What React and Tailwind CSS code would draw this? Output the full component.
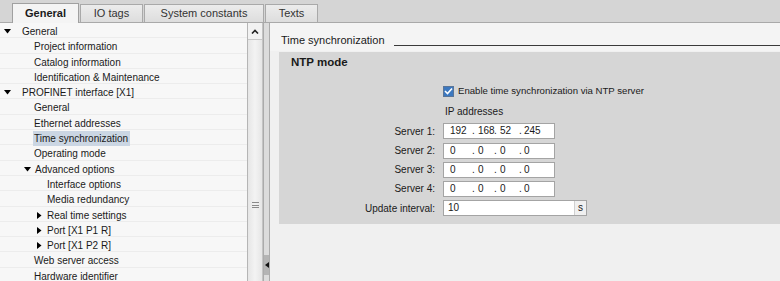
import React from "react";

const font = { fontFamily: '"Liberation Sans", Arial, sans-serif' };

const DownTri = () => (
  <svg width="7" height="5" viewBox="0 0 7 5" className="shrink-0">
    <path d="M0 0 H7 L3.5 4.5 Z" fill="#000" />
  </svg>
);

const RightTri = () => (
  <svg width="5" height="7" viewBox="0 0 5 7" className="shrink-0">
    <path d="M0 0 V7 L4.5 3.5 Z" fill="#000" />
  </svg>
);

const tree = [
  { label: "General", tri: "down", tx: 22, ax: 4 },
  { label: "Project information", tx: 34 },
  { label: "Catalog information", tx: 34 },
  { label: "Identification & Maintenance", tx: 34 },
  { label: "PROFINET interface [X1]", tri: "down", tx: 22, ax: 4 },
  { label: "General", tx: 34 },
  { label: "Ethernet addresses", tx: 34 },
  { label: "Time synchronization", tx: 34, selected: true },
  { label: "Operating mode", tx: 34 },
  { label: "Advanced options", tri: "down", tx: 35, ax: 24 },
  { label: "Interface options", tx: 47 },
  { label: "Media redundancy", tx: 47 },
  { label: "Real time settings", tri: "right", tx: 47, ax: 37 },
  { label: "Port [X1 P1 R]", tri: "right", tx: 47, ax: 37 },
  { label: "Port [X1 P2 R]", tri: "right", tx: 47, ax: 37 },
  { label: "Web server access", tx: 34 },
  { label: "Hardware identifier", tx: 34 },
];

const tabs = [
  { label: "General", w: 67, active: true },
  { label: "IO tags", w: 63 },
  { label: "System constants", w: 120 },
  { label: "Texts", w: 53 },
];

const IpField = ({ parts }) => (
  <div className="relative h-[16px] w-[112px] border border-[#a4a4a4] bg-white text-[10px] leading-[14px]">
    <span className="absolute left-[6px]">{parts[0]}</span>
    <span className="absolute left-[28px]">.</span>
    <span className="absolute left-[34px]">{parts[1]}</span>
    <span className="absolute left-[50px]">.</span>
    <span className="absolute left-[56px]">{parts[2]}</span>
    <span className="absolute left-[75px]">.</span>
    <span className="absolute left-[80px]">{parts[3]}</span>
  </div>
);

const servers = [
  ["192", "168", "52", "245"],
  ["0", "0", "0", "0"],
  ["0", "0", "0", "0"],
  ["0", "0", "0", "0"],
];

export default function App() {
  return (
    <div className="flex h-[281px] w-[780px] flex-col overflow-hidden bg-[#d5d5d5] text-[#1a1a1a]" style={font}>
      {/* Tabs */}
      <div className="flex h-[23px] shrink-0 items-end gap-[1px] border-b border-[#a9a9a9] pl-[12px]">
        {tabs.map((t) => (
          <div
            key={t.label}
            style={{ width: t.w }}
            className={
              t.active
                ? "-mb-[1px] flex h-[20px] items-center justify-center border border-b-0 border-[#a0a0a0] bg-[#f4f4f4] text-[11px] font-bold"
                : "flex h-[18px] items-center justify-center border border-b-0 border-[#a9a9a9] bg-gradient-to-b from-[#ececec] to-[#dddddd] text-[11px] text-[#333]"
            }
          >
            {t.label}
          </div>
        ))}
      </div>

      <div className="flex min-h-0 flex-1">
        {/* Tree */}
        <div className="w-[247px] shrink-0 bg-[#f7f7f7] text-[10px]">
          {tree.map((r, i) => (
            <div key={i} className="relative h-[15.3px] border-b border-[#ececec]">
              {r.tri && (
                <span className="absolute flex" style={{ left: r.ax, top: r.tri === "down" ? 6 : 5 }}>
                  {r.tri === "down" ? <DownTri /> : <RightTri />}
                </span>
              )}
              <span
                className={
                  "absolute top-[1px] h-[15px] leading-[15px] " + (r.selected ? "bg-[#cbd6e3] pr-[2px] pl-[1px]" : "")
                }
                style={{ left: r.selected ? r.tx - 1 : r.tx }}
              >
                {r.label}
              </span>
            </div>
          ))}
        </div>

        {/* Scrollbar */}
        <div className="flex w-[16px] shrink-0 flex-col border-l border-[#b5b5b5] border-r border-r-[#c4c4c4] bg-[#ebebeb]">
          <div className="flex h-[17px] items-center justify-center border-b border-[#c8c8c8] bg-[#f2f2f2]">
            <svg width="8" height="5" viewBox="0 0 8 5">
              <path d="M1 4.5 L4 1.5 L7 4.5" stroke="#222" strokeWidth="1.6" fill="none" />
            </svg>
          </div>
          <div className="flex flex-1 items-start justify-center bg-gradient-to-r from-[#e6e6e6] via-[#f3f3f3] to-[#e6e6e6] pt-[162px]">
            <div className="flex h-[6px] w-[7px] flex-col justify-between">
              <div className="h-[1px] bg-[#8a8a8a]" />
              <div className="h-[1px] bg-[#8a8a8a]" />
              <div className="h-[1px] bg-[#8a8a8a]" />
            </div>
          </div>
        </div>

        {/* Splitter */}
        <div className="flex w-[7px] shrink-0 flex-col border-l border-r border-[#ababab] bg-[#dcdcdc]">
          <div className="flex-1" />
          <div className="mb-[6px] flex h-[20px] items-center justify-center bg-[#b4b4b4]">
            <svg width="4" height="6" viewBox="0 0 4 6">
              <path d="M4 0 V6 L0 3 Z" fill="#111" />
            </svg>
          </div>
        </div>

        {/* Right panel */}
        <div className="min-w-0 flex-1 bg-[#f0f0f0]">
          <div className="flex h-[28px] items-end bg-[#f4f4f4] pl-[11px]">
            <span className="mb-[4px] text-[11px] leading-[14px]">Time synchronization</span>
            <div className="mb-[5px] ml-[9px] h-[1px] flex-1 bg-[#3a3a3a]" />
          </div>
          <div className="ml-[9px] mt-[1px] h-[172px] bg-[#d6d6d6] pt-[3px]">
            <div className="pl-[12px] text-[11.5px] font-bold leading-[14px]">NTP mode</div>
            <div className="mt-[15px] flex items-center pl-[164px]">
              <div className="flex h-[11px] w-[11px] items-center justify-center border border-[#5a7597] bg-[#3c78c0]">
                <svg width="9" height="8" viewBox="0 0 9 8">
                  <path d="M1 4 L3.5 6.5 L8 1.5" stroke="#fff" strokeWidth="1.6" fill="none" />
                </svg>
              </div>
              <span className="ml-[4px] text-[9.6px]">Enable time synchronization via NTP server</span>
            </div>
            <div className="mt-[7px] pl-[166px] text-[10px] leading-[13px]">IP addresses</div>
            <div className="mt-[5px] flex flex-col gap-[3.2px]">
              {servers.map((s, i) => (
                <div key={i} className="flex items-center">
                  <span className="w-[156px] text-right text-[10px]">Server {i + 1}:</span>
                  <div className="ml-[8px]">
                    <IpField parts={s} />
                  </div>
                </div>
              ))}
              <div className="flex items-center">
                <span className="w-[156px] text-right text-[10px]">Update interval:</span>
                <div className="ml-[8px] flex h-[16px] w-[144px] border border-[#a4a4a4] bg-white text-[10px] leading-[14px]">
                  <span className="flex-1 pl-[4px]">10</span>
                  <span className="w-[12px] border-l border-[#d0d0d0] bg-[#f0f0f0] text-center">s</span>
                </div>
              </div>
            </div>
          </div>
        </div>
      </div>
    </div>
  );
}
